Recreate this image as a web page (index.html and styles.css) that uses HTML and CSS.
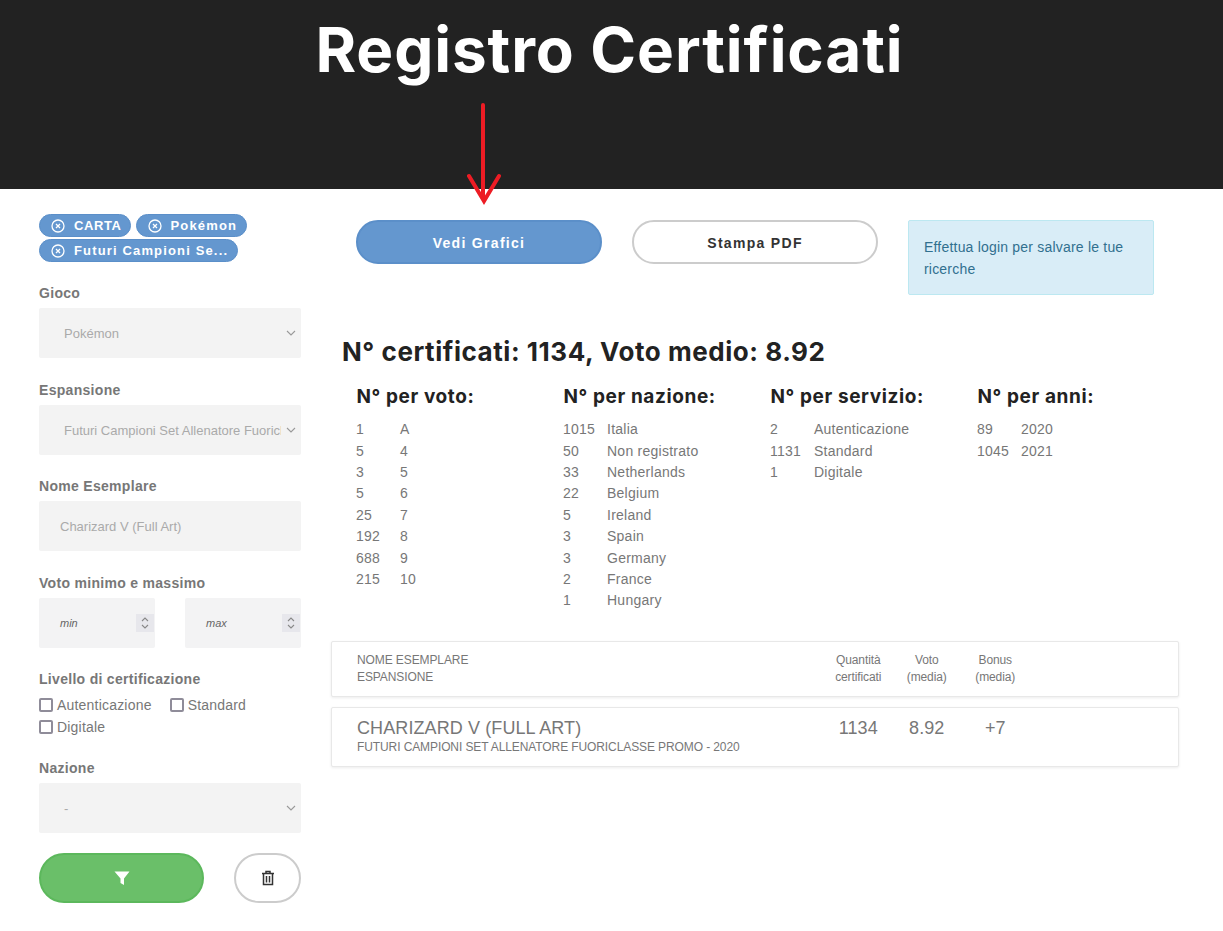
FILE: index.html
```html
<!DOCTYPE html>
<html lang="it">
<head>
<meta charset="utf-8">
<title>Registro Certificati</title>
<link rel="stylesheet" href="styles.css">
</head>
<body>
<header class="hero"><h1>Registro Certificati</h1></header>
<svg class="arrow" width="40" height="104" viewBox="0 0 40 104"><path d="M16 2V96M2 73L17 98L32 73" fill="none" stroke="#ed1c24" stroke-width="4" stroke-linecap="round" stroke-linejoin="miter"/></svg>
<div class="page">
  <aside class="side">
    <div class="chips">
      <span class="chip short"><svg class="x" viewBox="0 0 14 14"><circle cx="7" cy="7" r="6"/><path d="M5 5l4 4M9 5l-4 4"/></svg>CARTA</span>
      <span class="chip"><svg class="x" viewBox="0 0 14 14"><circle cx="7" cy="7" r="6"/><path d="M5 5l4 4M9 5l-4 4"/></svg>Pokémon</span>
      <span class="chip"><svg class="x" viewBox="0 0 14 14"><circle cx="7" cy="7" r="6"/><path d="M5 5l4 4M9 5l-4 4"/></svg>Futuri Campioni Se...</span>
    </div>
    <div class="group">
      <div class="lab">Gioco</div>
      <div class="sel"><span class="val">Pokémon</span><svg class="chev" viewBox="0 0 10 6"><path d="M1 1l4 4 4-4"/></svg></div>
    </div>
    <div class="group snug">
      <div class="lab">Espansione</div>
      <div class="sel"><span class="val clip">Futuri Campioni Set Allenatore Fuoriclasse Promo</span><svg class="chev" viewBox="0 0 10 6"><path d="M1 1l4 4 4-4"/></svg></div>
    </div>
    <div class="group">
      <div class="lab">Nome Esemplare</div>
      <div class="sel text"><span class="val">Charizard V (Full Art)</span></div>
    </div>
    <div class="group snug">
      <div class="lab">Voto minimo e massimo</div>
      <div class="pair">
        <div class="num"><span class="ph">min</span><span class="spin"><svg viewBox="0 0 10 14"><path d="M2 5l3-3 3 3M2 9l3 3 3-3"/></svg></span></div>
        <div class="num"><span class="ph">max</span><span class="spin"><svg viewBox="0 0 10 14"><path d="M2 5l3-3 3 3M2 9l3 3 3-3"/></svg></span></div>
      </div>
    </div>
    <div class="group tight">
      <div class="lab">Livello di certificazione</div>
      <div class="checks">
        <label class="chk"><span class="box"></span>Autenticazione</label>
        <label class="chk"><span class="box"></span>Standard</label>
        <label class="chk"><span class="box"></span>Digitale</label>
      </div>
    </div>
    <div class="group tight">
      <div class="lab">Nazione</div>
      <div class="sel"><span class="val">-</span><svg class="chev" viewBox="0 0 10 6"><path d="M1 1l4 4 4-4"/></svg></div>
    </div>
    <div class="actions">
      <button class="go"><svg width="16" height="16" viewBox="0 0 16 16"><path d="M0.5 1.5h15L10 8.5V15L6.5 13V8.5z" fill="#fff"/></svg></button>
      <button class="trash"><svg width="14" height="16" viewBox="0 0 14 16"><path d="M1 3.5h12M5 3.5V1.5h4v2M2.5 3.5v11h9v-11M5.5 6v6.5M8.5 6v6.5" fill="none" stroke="#333" stroke-width="1.5"/></svg></button>
    </div>
  </aside>
  <main class="main">
    <div class="top">
      <a class="pill blue">Vedi Grafici</a>
      <a class="pill plain">Stampa PDF</a>
      <div class="alert">Effettua login per salvare le tue ricerche</div>
    </div>
    <h2 class="total">N° certificati: 1134, Voto medio: 8.92</h2>
    <div class="stats">
      <section class="stat">
        <h3>N° per voto:</h3>
        <div class="rows">
          <span>1</span><span>A</span><span>5</span><span>4</span><span>3</span><span>5</span><span>5</span><span>6</span><span>25</span><span>7</span><span>192</span><span>8</span><span>688</span><span>9</span><span>215</span><span>10</span>
        </div>
      </section>
      <section class="stat">
        <h3>N° per nazione:</h3>
        <div class="rows">
          <span>1015</span><span>Italia</span><span>50</span><span>Non registrato</span><span>33</span><span>Netherlands</span><span>22</span><span>Belgium</span><span>5</span><span>Ireland</span><span>3</span><span>Spain</span><span>3</span><span>Germany</span><span>2</span><span>France</span><span>1</span><span>Hungary</span>
        </div>
      </section>
      <section class="stat">
        <h3>N° per servizio:</h3>
        <div class="rows">
          <span>2</span><span>Autenticazione</span><span>1131</span><span>Standard</span><span>1</span><span>Digitale</span>
        </div>
      </section>
      <section class="stat">
        <h3>N° per anni:</h3>
        <div class="rows">
          <span>89</span><span>2020</span><span>1045</span><span>2021</span>
        </div>
      </section>
    </div>
    <div class="card head">
      <div class="name">NOME ESEMPLARE<br>ESPANSIONE</div>
      <div class="c1">Quantità<br>certificati</div>
      <div class="c2">Voto<br>(media)</div>
      <div class="c3">Bonus<br>(media)</div>
    </div>
    <div class="card row">
      <div class="name"><div class="big">CHARIZARD V (FULL ART)</div><div class="sub">FUTURI CAMPIONI SET ALLENATORE FUORICLASSE PROMO - 2020</div></div>
      <div class="c1 big">1134</div>
      <div class="c2 big">8.92</div>
      <div class="c3 big">+7</div>
    </div>
  </main>
</div>
</body>
</html>
```
FILE: styles.css
```css
* { box-sizing: border-box; }
body { margin: 0; background: #fff; color: #777; font-family: "Liberation Sans", Arial, sans-serif; font-size: 14px; position: relative; min-height: 931px; }
.hero { height: 189px; background: #222; text-align: center; }
.hero h1 { margin: 0; padding-top: 12px; color: #fff; font-family: Inter, sans-serif; font-size: 62px; line-height: 75px; font-weight: 700; letter-spacing: .9px; transform: translateX(-2px); }
.arrow { position: absolute; left: 467px; top: 103px; }
.page { display: flex; padding-left: 39px; }
.side { width: 262px; padding-top: 25px; flex: none; }
.chips { display: flex; flex-wrap: wrap; gap: 2px 5px; margin-bottom: 21px; }
.chip { display: inline-flex; align-items: center; height: 23px; padding: 0 9px 0 11px; border-radius: 12px; background: #6497cf; border: 1px solid #5b8fc9; color: #fff; font-weight: 700; font-size: 13px; letter-spacing: 1.15px; }
.chip.short { padding-right: 8px; letter-spacing: .6px; }
.x { width: 14px; height: 14px; margin-right: 9px; fill: none; stroke: #fff; stroke-width: 1.3; }
.group { margin-bottom: 22px; }
.group.snug { margin-bottom: 21px; }
.group.tight { margin-bottom: 20px; }
.lab { height: 20px; line-height: 20px; margin-bottom: 5px; font-weight: 700; font-size: 14px; letter-spacing: .3px; color: #777; }
.sel { display: flex; align-items: center; height: 50px; padding: 0 5px 0 25px; background: #f3f3f3; border-radius: 2px; font-size: 13px; color: #aaa; }
.sel.text { padding-left: 21px; }
.val { flex: 1; min-width: 0; }
.clip { white-space: nowrap; overflow: hidden; }
.chev { width: 10px; height: 6px; margin-left: 5px; flex: none; fill: none; stroke: #999; stroke-width: 1.1; }
.pair { display: flex; justify-content: space-between; }
.num { position: relative; display: flex; align-items: center; width: 116px; height: 50px; padding-left: 21px; background: #f3f3f4; border-radius: 2px; }
.ph { font-style: italic; font-size: 11px; color: #666; }
.spin { display: flex; align-items: center; justify-content: center; width: 18px; height: 18px; position: absolute; right: 1px; top: 16px; background: #e7e7ec; }
.spin svg { width: 10px; height: 14px; fill: none; stroke: #888; stroke-width: 1.1; }
.checks { display: flex; flex-wrap: wrap; column-gap: 18px; }
.chk { display: inline-flex; align-items: center; height: 22px; line-height: 22px; font-size: 14px; letter-spacing: .2px; color: #777; }
.box { width: 14px; height: 14px; margin-right: 4px; border: 2px solid #8f8c99; border-radius: 2px; background: #fff; }
.actions { display: flex; justify-content: space-between; }
.actions button { height: 50px; border-radius: 25px; padding: 0; display: flex; align-items: center; justify-content: center; }
.go { width: 165px; background: #6abf69; border: 2px solid #5cb85c; }
.trash { width: 67px; background: #fff; border: 2px solid #ccc; }
.main { width: 848px; margin-left: 30px; padding-top: 31px; }
.top { display: flex; align-items: flex-start; padding-left: 25px; }
.pill { display: flex; align-items: center; justify-content: center; width: 246px; height: 44px; padding-top: 1px; border-radius: 22px; font-weight: 700; font-size: 14px; letter-spacing: 1.3px; }
.blue { background: #6497cf; border: 2px solid #5b8fc9; color: #fff; }
.plain { margin-left: 30px; background: #fff; border: 2px solid #ccc; color: #333; }
.alert { margin-left: 30px; width: 246px; height: 75px; padding: 15px; background: #d9edf7; border: 1px solid #bce8f1; border-radius: 2px; color: #31708f; line-height: 22px; letter-spacing: .2px; }
.total { margin: 41px 0 0 11px; font-family: Inter, sans-serif; font-size: 26px; line-height: 32px; font-weight: 700; letter-spacing: .55px; color: #222; }
.stats { display: flex; padding-left: 25px; margin-top: 16px; height: 257px; }
.stat { width: 207px; flex: none; }
.stat h3 { margin: 0 0 9.3px; padding-left: .5px; font-family: Inter, sans-serif; font-size: 19px; line-height: 26px; font-weight: 700; letter-spacing: .6px; color: #222; }
.rows { display: grid; grid-template-columns: 44px 1fr; grid-auto-rows: 21.4px; line-height: 21.4px; letter-spacing: .25px; }
.card { display: flex; width: 848px; padding-left: 25px; background: #fff; border: 1px solid #e8e8e8; border-radius: 2px; box-shadow: 0 1px 3px rgba(0,0,0,.08); }
.head { height: 56px; padding-top: 10px; font-size: 12px; line-height: 17px; letter-spacing: -.1px; }
.row { height: 60px; margin-top: 10px; padding-top: 9px; }
.name { width: 467px; }
.c1, .c2, .c3 { width: 68.5px; text-align: center; }
.big { font-size: 18px; line-height: 22px; letter-spacing: .1px; }
.sub { font-size: 12px; line-height: 17px; letter-spacing: -.1px; }
```
